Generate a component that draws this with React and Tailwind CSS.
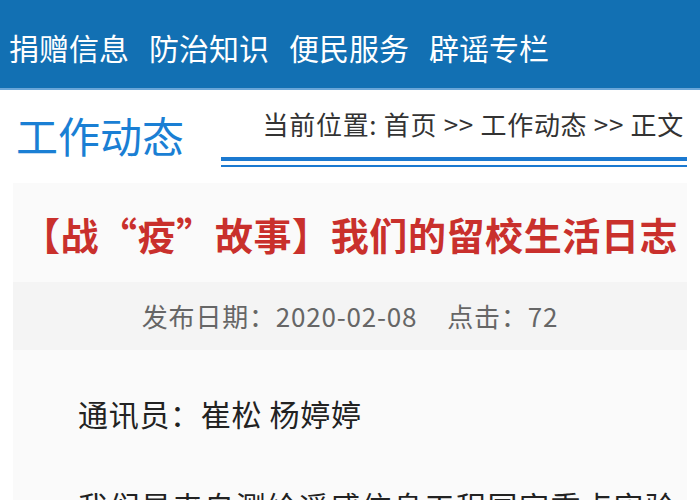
import React from "react";

const navItems = ["捐赠信息", "防治知识", "便民服务", "辟谣专栏"];

function App() {
  return (
    <div className="w-[700px] h-[500px] overflow-hidden bg-white font-['Noto_Sans_CJK_SC','Noto_Sans',sans-serif]">
      <header className="h-[90px] bg-[#1270b3] border-b-2 border-[#6aa6d8] flex items-center pl-[9px] pt-[6px] gap-[20px]">
        {navItems.map((item) => (
          <a key={item} className="text-white text-[30px] leading-none">
            {item}
          </a>
        ))}
      </header>

      <div className="h-[93px] flex justify-between">
        <h2 className="pl-[16px] pt-[24px] text-[42px] leading-none text-[#1a7fd4]">
          工作动态
        </h2>

        <div className="w-[466px] mr-[13px] pt-[21px]">
          <div className="text-right pr-[3px] text-[26px] leading-none text-[#333333] tracking-[0.7px]">
            当前位置: 首页 &gt;&gt; 工作动态 &gt;&gt; 正文
          </div>
          <div className="mt-[20px] h-[4px] bg-[#1b79d0]"></div>
          <div className="mt-[4px] h-[2px] bg-[#1b79d0]"></div>
        </div>
      </div>

      <article className="mx-[13px] bg-[#fafafa] h-[400px]">
        <h1 className="pt-[32px] pb-[29px] text-center text-[38px] leading-none font-bold text-[#c9302c] whitespace-nowrap tracking-[0.6px]">
          【战“疫”故事】我们的留校生活日志
        </h1>

        <div className="h-[68px] bg-[#f4f4f4] flex items-center justify-center text-[26px] leading-none text-[#666666]">
          <span className="tracking-[0.8px]">发布日期：2020-02-08</span>
          <span className="ml-[30px] tracking-[0.8px]">点击：72</span>
        </div>

        <div className="pl-[65px] text-[#222222]">
          <p className="mt-[48px] text-[30px] leading-none tracking-[0.7px]">通讯员：崔松 杨婷婷</p>
          <p className="mt-[54px] text-[30px] leading-[46px] tracking-[1.5px]">
            我们是来自测绘遥感信息工程国家重点实验室的研究生，因为疫情我们选择了留校。
          </p>
        </div>
      </article>
    </div>
  );
}

export default App;
